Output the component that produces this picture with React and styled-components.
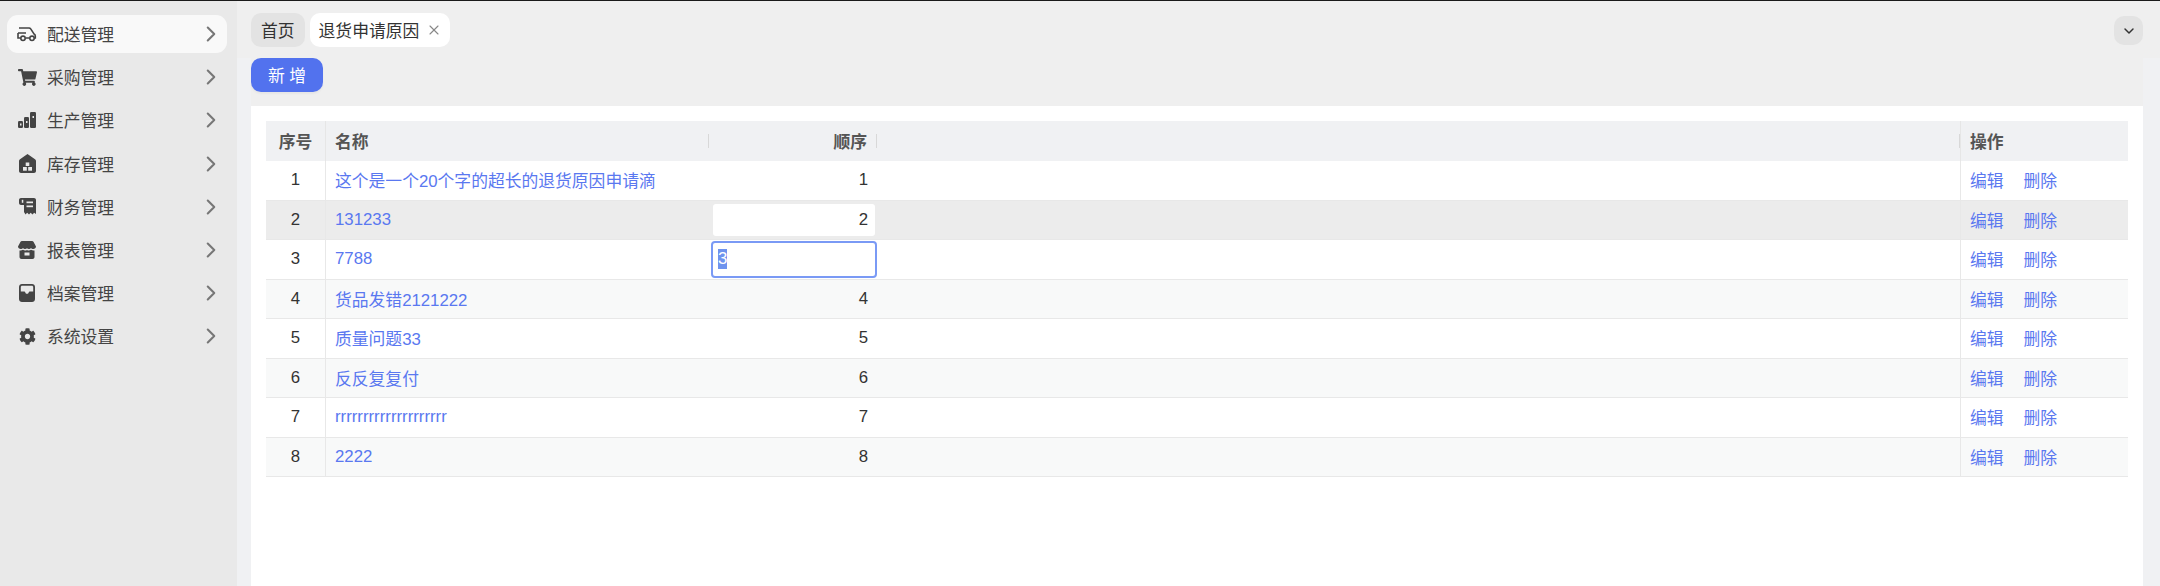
import React from 'react'
import styled, { createGlobalStyle } from 'styled-components'
import { ChevronRight, ChevronDown, X } from 'lucide-react'
import { FaCog, FaShoppingCart } from 'react-icons/fa'

const GlobalStyle = createGlobalStyle`
  html, body {
    margin: 0;
    height: 100%;
    overflow: hidden;
    background: #f0f1f3;
  }
  body {
    font-family: "Liberation Sans", "Noto Sans CJK SC", sans-serif;
    font-size: 16.8px;
    color: #333;
  }
`

const CarIcon = () => (
  <svg width="20" height="16" viewBox="0 0 20 16" fill="none" stroke="#444" strokeWidth="1.6">
    <path d="M2 2h10c.7 0 1.300.3 1.700.9L17 8c.8.4 1.300 1.100 1.300 2v2h-1M9 12h3.500M1 7h8M1 7v5h2.500" />
    <circle cx="6" cy="12.300" r="2.200" />
    <circle cx="15" cy="12.300" r="2.200" />
  </svg>
)

const StepsIcon = () => (
  <svg width="18" height="16" viewBox="0 0 18 16" fill="#444">
    <rect x="0" y="9" width="5" height="7" rx="1.200" />
    <rect x="6" y="5" width="5" height="11" rx="1.200" />
    <rect x="12" y="0" width="6" height="16" rx="1.200" />
    <rect x="2" y="11.500" width="1.500" height="2" fill="#e9e9e9" />
    <rect x="8" y="9" width="1.500" height="2" fill="#e9e9e9" />
    <rect x="14.500" y="4" width="1.500" height="2" fill="#e9e9e9" />
  </svg>
)

const HouseIcon = () => (
  <svg width="17" height="19" viewBox="0 0 17 19">
    <path d="M8.500 0 16 5.200c.6.400 1 1 1 1.800v10c0 1.100-.9 2-2 2H2c-1.100 0-2-.9-2-2V7c0-.8.400-1.400 1-1.800z" fill="#444" />
    <rect x="6.700" y="8.500" width="3.600" height="3.500" fill="#e9e9e9" />
    <rect x="4" y="13" width="3.800" height="3.700" fill="#e9e9e9" />
    <rect x="9.200" y="13" width="3.800" height="3.700" fill="#e9e9e9" />
  </svg>
)

const ReceiptIcon = () => (
  <svg width="17" height="17" viewBox="0 0 17 17">
    <path d="M2 0h13c1.100 0 2 .9 2 2v14l-1.800-1.300-1.700 1.800-1.800-1.800-1.700 1.800-1.800-1.800L6.500 16.500 5 14V7H2C.9 7 0 6.100 0 5V2C0 .9.900 0 2 0z" fill="#444" />
    <rect x="7.500" y="3.500" width="6.500" height="1.700" fill="#e9e9e9" />
    <rect x="7.500" y="7.500" width="6.500" height="1.700" fill="#e9e9e9" />
    <rect x="2.800" y="1.800" width="1.500" height="3" fill="#e9e9e9" />
  </svg>
)

const StoreIcon = () => (
  <svg width="18" height="18" viewBox="0 0 18 18">
    <path d="M4 0h10c.7 0 1.300.3 1.600.9L18 5.500C18 7 16.700 8 15.300 8c-1 0-1.800-.5-2.300-1.100-.5.7-1.400 1.100-2.200 1.100-.7 0-1.300-.3-1.800-.8-.5.5-1.100.8-1.800.8-.8 0-1.700-.4-2.200-1.100C4.500 7.500 3.700 8 2.700 8 1.300 8 0 7 0 5.500L2.400.9C2.700.3 3.300 0 4 0z" fill="#444" />
    <path d="M1.500 9.500c1.200.3 2.400 0 3.500-.7 1.200.8 2.800.8 4 .1 1.200.7 2.800.7 4-.1 1.100.7 2.300 1 3.500.7V16c0 1.100-.9 2-2 2h-11c-1.100 0-2-.9-2-2z" fill="#444" />
    <rect x="6.500" y="11.500" width="5" height="3" fill="#e9e9e9" />
  </svg>
)

const TrayIcon = () => (
  <svg width="16" height="18" viewBox="0 0 16 18">
    <path d="M3 0h10c1.700 0 3 1.300 3 3v12c0 1.700-1.300 3-3 3H3c-1.700 0-3-1.300-3-3V3c0-1.700 1.300-3 3-3z" fill="#444" />
    <path d="M3.200 1.800h9.600c.8 0 1.400.6 1.400 1.400v4.300h-3.400c-.6 0-1 .4-1.100 1-.2.800-.8 1.300-1.700 1.300s-1.500-.5-1.700-1.300c-.1-.6-.5-1-1.100-1H1.800V3.200c0-.8.600-1.400 1.400-1.400z" fill="#e9e9e9" />
  </svg>
)

const menuItems = [
  { label: '配送管理', icon: <CarIcon />, active: true },
  { label: '采购管理', icon: <FaShoppingCart size={19} color="#444" /> },
  { label: '生产管理', icon: <StepsIcon /> },
  { label: '库存管理', icon: <HouseIcon /> },
  { label: '财务管理', icon: <ReceiptIcon /> },
  { label: '报表管理', icon: <StoreIcon /> },
  { label: '档案管理', icon: <TrayIcon /> },
  { label: '系统设置', icon: <FaCog size={17} color="#444" /> },
]

const rows = [
  { id: 1, name: '这个是一个20个字的超长的退货原因申请滴' },
  { id: 2, name: '131233', mode: 'hover' },
  { id: 3, name: '7788', mode: 'focus' },
  { id: 4, name: '货品发错2121222' },
  { id: 5, name: '质量问题33' },
  { id: 6, name: '反反复复付' },
  { id: 7, name: 'rrrrrrrrrrrrrrrrrrrr' },
  { id: 8, name: '2222' },
]

// watermark repeats on a slanted lattice
const marks = []
for (let i = -2; i < 6; i++) {
  for (let j = -2; j < 7; j++) {
    const x = 360 + 290 * i + 480 * j
    const y = 582 - 163 * i + 106 * j
    if (x > -150 && x < 2300 && y > -60 && y < 660) marks.push({ x, y })
  }
}

export default function App() {
  return (
    <>
      <GlobalStyle />
      <Page>
        <TopLine />
        <Shell>
          <Sidebar>
            {menuItems.map(item => (
              <MenuItem key={item.label} $active={item.active}>
                <MenuIcon>{item.icon}</MenuIcon>
                <MenuLabel>{item.label}</MenuLabel>
                <ChevronRight size={26} color="#777" strokeWidth={1.9} />
              </MenuItem>
            ))}
          </Sidebar>
          <Main>
            <TabBar>
              <Tab>首页</Tab>
              <Tab $active>
                退货申请原因
                <X size={16} color="#888" strokeWidth={1.7} />
              </Tab>
              <CollapseButton>
                <ChevronDown size={16} color="#333" strokeWidth={2.2} />
              </CollapseButton>
            </TabBar>
            <Content>
              <Toolbar>
                <AddButton>新 增</AddButton>
              </Toolbar>
              <Card>
                <HeadRow>
                  <HeadCell $center $line>序号</HeadCell>
                  <HeadCell $grip>名称</HeadCell>
                  <HeadCell $right $grip>顺序</HeadCell>
                  <HeadCell $line $grip />
                  <HeadCell>操作</HeadCell>
                </HeadRow>
                {rows.map(row => (
                  <Row key={row.id} $even={row.id % 2 === 0} $hover={row.mode === 'hover'}>
                    <Cell $center $line>{row.id}</Cell>
                    <Cell><LinkText>{row.name}</LinkText></Cell>
                    {row.mode === 'hover' && <OrderCell><HoverInput>{row.id}</HoverInput></OrderCell>}
                    {row.mode === 'focus' && <OrderCell><FocusInput><Selected>{row.id}</Selected></FocusInput></OrderCell>}
                    {!row.mode && <Cell $right>{row.id}</Cell>}
                    <Cell $line />
                    <ActionCell>
                      <LinkText>编辑</LinkText>
                      <LinkText>删除</LinkText>
                    </ActionCell>
                  </Row>
                ))}
              </Card>
            </Content>
          </Main>
        </Shell>
        <Watermarks>
          {marks.map(m => (
            <Mark key={`${m.x}-${m.y}`} style={{ left: m.x, top: m.y }}>李斐乐 -4527</Mark>
          ))}
        </Watermarks>
      </Page>
    </>
  )
}

const Page = styled.div`
  position: relative;
  height: 586px;
  display: flex;
  flex-direction: column;
  overflow: hidden;
`

const TopLine = styled.div`
  height: 1px;
  flex: none;
  background: #1a1a1a;
`

const Shell = styled.div`
  flex: 1;
  display: flex;
  min-height: 0;
`

const Sidebar = styled.nav`
  width: 237px;
  flex: none;
  box-sizing: border-box;
  padding: 14px 10px 0 7px;
  display: flex;
  flex-direction: column;
  gap: 5.2px;
  background: #e9e9e9;
`

const MenuItem = styled.div`
  height: 38px;
  display: flex;
  align-items: center;
  padding: 0 3px 0 10px;
  border-radius: 11px;
  color: #444;
  background: ${p => (p.$active ? '#f9f9f9' : 'transparent')};
`

const MenuIcon = styled.span`
  width: 20px;
  margin-right: 10px;
  display: flex;
  justify-content: center;
  align-items: center;
`

const MenuLabel = styled.span`
  flex: 1;
`

const Main = styled.div`
  flex: 1;
  min-width: 0;
  display: flex;
  flex-direction: column;
`

const TabBar = styled.div`
  height: 57px;
  flex: none;
  box-sizing: border-box;
  padding: 12px 17px 0 14px;
  display: flex;
  align-items: flex-start;
  gap: 5px;
  background: #efefef;
`

const Tab = styled.div`
  height: 34px;
  padding: ${p => (p.$active ? '0 8px 0 9px' : '0 10px')};
  display: flex;
  align-items: center;
  gap: 7px;
  border-radius: 10px;
  color: #333;
  background: ${p => (p.$active ? '#fff' : '#e3e3e3')};
`

const CollapseButton = styled.div`
  width: 29px;
  height: 29px;
  margin: 3px 0 0 auto;
  display: flex;
  align-items: center;
  justify-content: center;
  border-radius: 10px;
  background: #e3e3e3;
`

const Content = styled.div`
  flex: 1;
  min-height: 0;
  padding: 0 17px 0 14px;
  display: flex;
  flex-direction: column;
`

const Toolbar = styled.div`
  height: 48px;
  flex: none;
  background: #efefef;
`

const AddButton = styled.div`
  width: 72px;
  height: 34px;
  display: flex;
  align-items: center;
  justify-content: center;
  border-radius: 10px;
  color: #fff;
  background: #5272ee;
  box-shadow: 0 2px 2px rgba(0, 0, 0, 0.04);
`

const Card = styled.div`
  flex: 1;
  padding: 15px 15px 0;
  background: #fff;
`

const columns = '60px 384px 168px 1083px 167px'

const HeadRow = styled.div`
  display: grid;
  grid-template-columns: ${columns};
  height: 40px;
  background: #f0f1f3;
`

const HeadCell = styled.div`
  position: relative;
  box-sizing: border-box;
  padding: ${p => (p.$right || p.$center ? '0 10px' : '0 9px')};
  display: flex;
  align-items: center;
  justify-content: ${p => (p.$center ? 'center' : p.$right ? 'flex-end' : 'flex-start')};
  font-weight: 700;
  color: #555;
  border-right: ${p => (p.$line ? '1px solid #e6e6e6' : '1px solid transparent')};

  &::after {
    content: '';
    display: ${p => (p.$grip ? 'block' : 'none')};
    position: absolute;
    top: 13px;
    right: 0;
    width: 1px;
    height: 14px;
    background: #d8d8d8;
  }
`

const Row = styled.div`
  display: grid;
  grid-template-columns: ${columns};
  height: 39.5px;
  box-sizing: border-box;
  border-bottom: 1px solid #e8e8e8;
  background: ${p => (p.$hover ? '#ececec' : p.$even ? '#f8f9f9' : '#fff')};
`

const Cell = styled.div`
  box-sizing: border-box;
  padding: ${p => (p.$center ? '0 10px' : '0 9px')};
  display: flex;
  align-items: center;
  justify-content: ${p => (p.$center ? 'center' : p.$right ? 'flex-end' : 'flex-start')};
  color: #333;
  white-space: nowrap;
  border-right: ${p => (p.$line ? '1px solid #e8e8e8' : '1px solid transparent')};
`

const LinkText = styled.span`
  color: #5a78f0;
`

const OrderCell = styled.div`
  padding: 0 1px;
  display: flex;
  align-items: center;
`

const HoverInput = styled.div`
  flex: 1;
  height: 32px;
  margin: 0 2px;
  box-sizing: border-box;
  padding: 0 7px;
  display: flex;
  align-items: center;
  justify-content: flex-end;
  border-radius: 3px;
  background: #fff;
`

const FocusInput = styled.div`
  flex: 1;
  height: 37px;
  box-sizing: border-box;
  padding: 0 5px;
  display: flex;
  align-items: center;
  border: 2px solid #7a9af5;
  border-radius: 4px;
  background: #fff;
`

const Selected = styled.span`
  color: #fff;
  background: #6f93ee;
`

const ActionCell = styled.div`
  padding: 0 9px;
  display: flex;
  align-items: center;
  gap: 20px;
`

const Watermarks = styled.div`
  position: absolute;
  inset: 0;
  pointer-events: none;
`

const Mark = styled.span`
  position: absolute;
  font-size: 30px;
  line-height: 1;
  white-space: nowrap;
  color: rgba(0, 0, 0, 0.014);
  transform: translate(-50%, -50%) rotate(-26deg);
`
